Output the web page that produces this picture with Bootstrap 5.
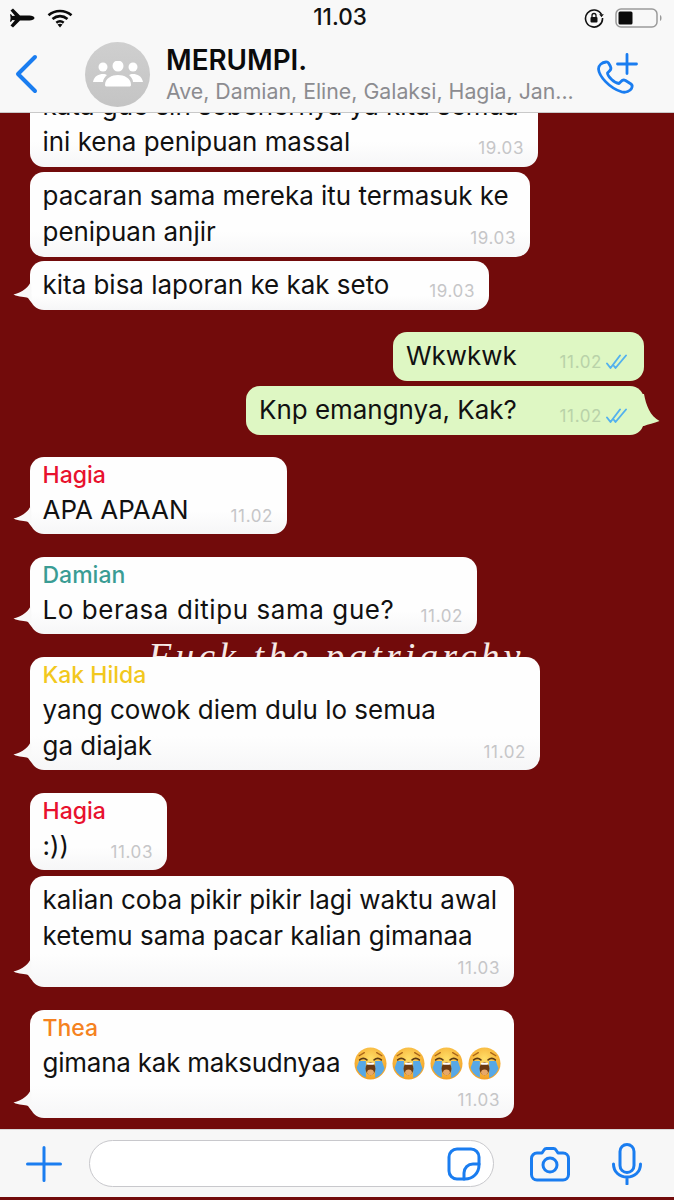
<!DOCTYPE html>
<html lang="en">
<head>
  <meta charset="UTF-8" />
  <meta name="viewport" content="width=device-width, initial-scale=1">
  <title>MERUMPI.</title>
  <link href="https://cdn.jsdelivr.net/npm/bootstrap@5.3.0/dist/css/bootstrap.min.css" rel="stylesheet" />
  <style>
    body { font-family: "Inter", "Liberation Sans", sans-serif; background: #720b0b; color: #111; overflow: hidden; }
    .phone { height: 1200px; }
    .status-bar { height: 36px; background: #f8f8f8; padding: 0 10px; }
    .status-gap { margin-left: 12px; }
    .batt { margin-left: 11px; }
    .clock { font-size: 22.500px; font-weight: 500; line-height: 1; left: 6px; right: 0; top: 6px; }
    .top-bar { height: 77px; background: #f8f8f8; border-bottom: 1px solid #c9c9c9; padding-left: 14px; padding-right: 36px; z-index: 3; }
    .group-pic { width: 65px; height: 65px; background: linear-gradient(#cfcfcf, #c4c4c4); margin-left: 47px; margin-right: 16px; }
    .group-name { font-size: 27.800px; font-weight: 600; line-height: 34px; color: #0b0b0b; }
    .group-members { font-size: 21.300px; line-height: 29px; color: #8c8c90; }
    .chat { height: 1016px; z-index: 1; }
    .bubble { background: linear-gradient(#fefefe 70%, #f6f6f7); border-radius: 14px; padding: 6px 14px 7px 12.500px; font-size: 25.950px; line-height: 36px; margin-left: 30px; z-index: 1; white-space: nowrap; }
    .bubble.mine { background: #def7c3; margin-left: auto; margin-right: 30px; padding-right: 16px; padding-left: 13px; }
    .bubble.named { padding-bottom: 6px; }
    .sender { font-size: 23px; font-weight: 500; line-height: 28px; margin-top: -2px; margin-bottom: 3px; }
    .stamp { font-size: 17px; line-height: 24px; color: #c6c6c8; letter-spacing: .6px; white-space: nowrap; }
    .stamp-up { margin-top: -24px; }
    .stamp-gap2 { margin-top: 2px; }
    .stamp-gap7 { margin-top: 7px; }
    .mine .stamp { color: #b9d2a9; }
    .tail { left: -17px; bottom: -1px; }
    .tail-r { right: -16px; bottom: 0; }
    .wide-line { letter-spacing: .6px; }
    .tight-line { letter-spacing: -.2px; }
    .cry-row { margin-left: 14px; gap: 5px; }
    .g4 { margin-top: 4px; } .g5 { margin-top: 5px; } .g6 { margin-top: 6px; }
    .g22 { margin-top: 22px; } .g23 { margin-top: 23px; }
    .first { margin-top: -31px; }
    .w137 { width: 137px; } .w251 { width: 251px; } .w257 { width: 257px; } .w398 { width: 398px; }
    .w447 { width: 447px; } .w459 { width: 459px; } .w484 { width: 484px; } .w500 { width: 500px; }
    .w508 { width: 508px; } .w510 { width: 510px; }
    .slogan { top: 523px; left: 148px; font-family: "Liberation Serif", serif; font-style: italic; font-size: 38px; letter-spacing: 4px; color: #f6e9e6; white-space: nowrap; line-height: 40px; }
    .c-hagia { color: #e8112d; } .c-damian { color: #3a9c94; } .c-hilda { color: #f2c81e; } .c-thea { color: #f58220; }
    .input-bar { height: 68px; background: #f7f7f7; border-top: 1px solid #d8d8d8; padding: 0 32px 0 26px; }
    .field { width: 405px; height: 47px; margin-left: 27px; margin-right: 36px; background: #fff; border: 1.500px solid #c8c8cc; padding-right: 12px; }
    .blue-ico { stroke: #1a7df0; fill: none; stroke-linecap: round; stroke-linejoin: round; }
  </style>
</head>
<body>
  <svg width="0" height="0" class="position-absolute">
    <defs>
      <radialGradient id="yel" cx="50%" cy="35%" r="70%">
        <stop offset="0" stop-color="#ffdf68" /><stop offset="1" stop-color="#f29a1e" />
      </radialGradient>
      <symbol id="cry" viewBox="0 0 32 32">
        <circle cx="16" cy="16" r="15.500" fill="url(#yel)" />
        <path d="M5 8.500 10 5.500M27 8.500 22 5.500" stroke="#a9651a" stroke-width="1.300" fill="none" stroke-linecap="round" />
        <path d="M5.500 12.500q3.500-3 7 0M19.500 12.500q3.500-3 7 0" stroke="#5b3a14" stroke-width="1.600" fill="none" stroke-linecap="round" />
        <path d="M5 13.500h6.500v16a13 13 0 0 1-6.500-4.500 15 15 0 0 1-2.500-5z" fill="#57a8e6" />
        <path d="M20.500 13.500H27l2.500 7a15 15 0 0 1-2.500 5 13 13 0 0 1-6.500 4.500z" fill="#57a8e6" />
        <ellipse cx="16" cy="21" rx="4.800" ry="6.300" fill="#6b3a12" />
        <ellipse cx="16" cy="24.500" rx="3.300" ry="2.800" fill="#e7a868" />
        <rect x="12.500" y="15.300" width="7" height="1.800" rx=".9" fill="#fff" />
      </symbol>
      <symbol id="tail-in" viewBox="0 0 20 34">
        <path d="M18 4C16 10 10 15 .5 17.500 6 20.500 12 19.500 15 21Q17 24 19 26z" fill="#f9f9f9" />
      </symbol>
      <symbol id="tail-out" viewBox="0 0 20 44">
        <path d="M4 3C6 14 10 25 19.500 30 14 32.500 8 33 4 35H2V3z" fill="#def7c3" />
      </symbol>
      <symbol id="ticks" viewBox="0 0 22 16">
        <path d="M1 9.500 4.500 14 14 1.500M8 12l1.500 2L20 1.500" fill="none" stroke="#53b1ee" stroke-width="1.900" stroke-linecap="round" stroke-linejoin="round" />
      </symbol>
    </defs>
  </svg>

  <div class="phone d-flex flex-column">
    <!-- status bar -->
    <div class="status-bar d-flex align-items-center position-relative flex-shrink-0">
      <svg width="25" height="22" viewBox="0 0 25 22">
        <path d="M.5 3.500 3 1.500 10 8.500 19.500 8.500C22 8.500 24.500 9.800 24.500 11S22 13.500 19.500 13.500H10L3 20.500.5 18.500 5 13.200 2.400 13.100.8 15 .1 14.500.6 11 .1 7.500.8 7 2.400 8.900 5 8.800z" fill="#0b0b0b" />
      </svg>
      <svg class="status-gap" width="26" height="20" viewBox="0 0 26 20">
        <path d="M1.500 7.200C8 1.500 18 1.500 24.500 7.200M5.500 11C10 7.200 16 7.200 20.500 11M9.300 14.700C11.500 13 14.500 13 16.700 14.700" fill="none" stroke="#0b0b0b" stroke-width="2.600" />
        <path d="M13 19.500 10.500 16.600C12 15.600 14 15.600 15.500 16.600z" fill="#0b0b0b" />
      </svg>
      <div class="clock position-absolute text-center">11.03</div>
      <svg class="ms-auto" width="20" height="20" viewBox="0 0 20 20">
        <path d="M17.500 6.500A8.500 8.500 0 1 0 18.500 10" fill="none" stroke="#111" stroke-width="1.600" />
        <path d="M15.200 6.200h4.600l-2.300 3z" fill="#111" />
        <rect x="6.500" y="9" width="7" height="5.500" rx="1" fill="#111" />
        <path d="M8 9V7.500a2 2 0 0 1 4 0V9" fill="none" stroke="#111" stroke-width="1.300" />
      </svg>
      <svg class="batt" width="49" height="22" viewBox="0 0 49 22">
        <rect x="1" y="2" width="41" height="18" rx="5" fill="none" stroke="#9a9a9a" stroke-width="1.500" />
        <rect x="3.500" y="4.500" width="14" height="13" rx="1.500" fill="#0b0b0b" />
        <path d="M45 8c2 .5 2 5.500 0 6z" fill="#9a9a9a" />
      </svg>
    </div>

    <!-- chat header -->
    <div class="top-bar d-flex align-items-center position-relative flex-shrink-0">
      <svg width="24" height="40" viewBox="0 0 24 40">
        <path class="blue-ico" d="M21 3 4 20l17 17" stroke-width="4" />
      </svg>
      <div class="group-pic rounded-circle d-flex align-items-center justify-content-center flex-shrink-0">
        <svg width="50" height="26" viewBox="0 0 50 26" fill="#fff">
          <circle cx="10" cy="6" r="4.500" /><circle cx="25" cy="5" r="5.500" /><circle cx="40" cy="6" r="4.500" />
          <path d="M0 21c1-6 6-8 10-8 2 0 3 .5 4 1-2 2-4 4-4 7z" />
          <path d="M50 21c-1-6-6-8-10-8-2 0-3 .5-4 1 2 2 4 4 4 7z" />
          <path d="M12 24c0-7 7-10 13-10s13 3 13 10c0 1-1 1.500-2 1.500H14c-1 0-2-.5-2-1.500z" />
        </svg>
      </div>
      <div class="flex-grow-1">
        <div class="group-name">MERUMPI.</div>
        <div class="group-members">Ave, Damian, Eline, Galaksi, Hagia, Jan...</div>
      </div>
      <svg width="42" height="42" viewBox="0 0 42 42">
        <path class="blue-ico" stroke-width="2.800" d="M10 9C6 9.500 2.500 12 2.500 16 3 23 13 35 26 39c4 1 8-1 9.500-3.500 1-2 1-3.500-.5-4.500l-5.500-3.500c-2-1-3.200-.5-4.500 1l-2 2C18 30 11.500 23 11.500 20l2.200-2.200c1.300-1.300 1.500-3 .7-4.500L12.500 10C12 9.300 11 8.800 10 9z" />
        <path class="blue-ico" stroke-width="2.800" d="M31 1.500v19M21.500 11h19" />
      </svg>
    </div>

    <!-- messages -->
    <div class="chat position-relative overflow-hidden flex-shrink-0">
      <div class="slogan position-absolute">Fuck the patriarchy</div>

      <div class="bubble position-relative w508 first">
        <div>kata gue sih sebenernya ya kita semua<br>ini kena penipuan massal</div>
        <div class="stamp stamp-up text-end">19.03</div>
      </div>
      <div class="bubble position-relative w500 g5">
        <div>pacaran sama mereka itu termasuk ke<br>penipuan anjir</div>
        <div class="stamp stamp-up text-end">19.03</div>
      </div>
      <div class="bubble position-relative w459 g4 d-flex justify-content-between">
        <svg class="tail position-absolute" width="20" height="34"><use href="#tail-in" /></svg>
        <div>kita bisa laporan ke kak seto</div>
        <div class="stamp align-self-end">19.03</div>
      </div>

      <div class="bubble mine position-relative w251 g22 d-flex justify-content-between">
        <div>Wkwkwk</div>
        <div class="stamp align-self-end d-flex align-items-center gap-1">11.02 <svg width="22" height="16"><use href="#ticks" /></svg></div>
      </div>
      <div class="bubble mine position-relative w398 g5 d-flex justify-content-between">
        <svg class="tail-r position-absolute" width="20" height="44"><use href="#tail-out" /></svg>
        <div>Knp emangnya, Kak?</div>
        <div class="stamp align-self-end d-flex align-items-center gap-1">11.02 <svg width="22" height="16"><use href="#ticks" /></svg></div>
      </div>

      <div class="bubble named position-relative w257 g22">
        <svg class="tail position-absolute" width="20" height="34"><use href="#tail-in" /></svg>
        <div class="sender c-hagia">Hagia</div>
        <div class="d-flex justify-content-between">
          <div>APA APAAN</div>
          <div class="stamp align-self-end">11.02</div>
        </div>
      </div>

      <div class="bubble named position-relative w447 g23">
        <svg class="tail position-absolute" width="20" height="34"><use href="#tail-in" /></svg>
        <div class="sender c-damian">Damian</div>
        <div class="d-flex justify-content-between">
          <div class="wide-line">Lo berasa ditipu sama gue?</div>
          <div class="stamp align-self-end">11.02</div>
        </div>
      </div>

      <div class="bubble named position-relative w510 g23">
        <svg class="tail position-absolute" width="20" height="34"><use href="#tail-in" /></svg>
        <div class="sender c-hilda">Kak Hilda</div>
        <div>yang cowok diem dulu lo semua<br>ga diajak</div>
        <div class="stamp stamp-up text-end">11.02</div>
      </div>

      <div class="bubble named position-relative w137 g23">
        <div class="sender c-hagia">Hagia</div>
        <div class="d-flex justify-content-between">
          <div>:))</div>
          <div class="stamp align-self-end">11.03</div>
        </div>
      </div>
      <div class="bubble position-relative w484 g6">
        <svg class="tail position-absolute" width="20" height="34"><use href="#tail-in" /></svg>
        <div>kalian coba pikir pikir lagi waktu awal<br>ketemu sama pacar kalian gimanaa</div>
        <div class="stamp stamp-gap2 text-end">11.03</div>
      </div>

      <div class="bubble named position-relative w484 g23">
        <svg class="tail position-absolute" width="20" height="34"><use href="#tail-in" /></svg>
        <div class="sender c-thea">Thea</div>
        <div class="d-flex align-items-center">
          <span class="tight-line">gimana kak maksudnyaa</span>
          <span class="cry-row d-inline-flex">
            <svg width="33" height="33"><use href="#cry" /></svg>
            <svg width="33" height="33"><use href="#cry" /></svg>
            <svg width="33" height="33"><use href="#cry" /></svg>
            <svg width="33" height="33"><use href="#cry" /></svg>
          </span>
        </div>
        <div class="stamp stamp-gap7 text-end">11.03</div>
      </div>
    </div>

    <!-- input bar -->
    <div class="input-bar d-flex align-items-center flex-shrink-0">
      <svg width="36" height="36" viewBox="0 0 36 36"><path class="blue-ico" stroke-width="3" d="M18 1.500v33M1.500 18h33" /></svg>
      <div class="field rounded-pill d-flex align-items-center justify-content-end">
        <svg width="34" height="34" viewBox="0 0 34 34">
          <path class="blue-ico" stroke-width="3" d="M10 2h14a8 8 0 0 1 8 8v8C32 26 26 32 18 32h-8a8 8 0 0 1-8-8V10a8 8 0 0 1 8-8z" />
          <path class="blue-ico" stroke-width="3" d="M32 17h-6c-5 0-9 4-9 9v6" />
        </svg>
      </div>
      <svg width="40" height="36" viewBox="0 0 40 36">
        <path class="blue-ico" stroke-width="3" d="M7 7h5l2-3c.6-1 1.500-1.500 2.500-1.500h7c1 0 1.900.5 2.500 1.500l2 3h5a5.500 5.500 0 0 1 5.500 5.500v16A5.500 5.500 0 0 1 33 34H7a5.500 5.500 0 0 1-5.500-5.500v-16A5.500 5.500 0 0 1 7 7z" />
        <circle class="blue-ico" stroke-width="3" cx="20" cy="19" r="7" />
      </svg>
      <svg class="ms-auto" width="30" height="42" viewBox="0 0 30 42">
        <rect class="blue-ico" stroke-width="3" x="8" y="1.500" width="14" height="28" rx="7" />
        <path class="blue-ico" stroke-width="3" d="M1.500 21c0 8 6 13 13.500 13s13.500-5 13.500-13M15 34v7" />
      </svg>
    </div>
  </div>
</body>
</html>
